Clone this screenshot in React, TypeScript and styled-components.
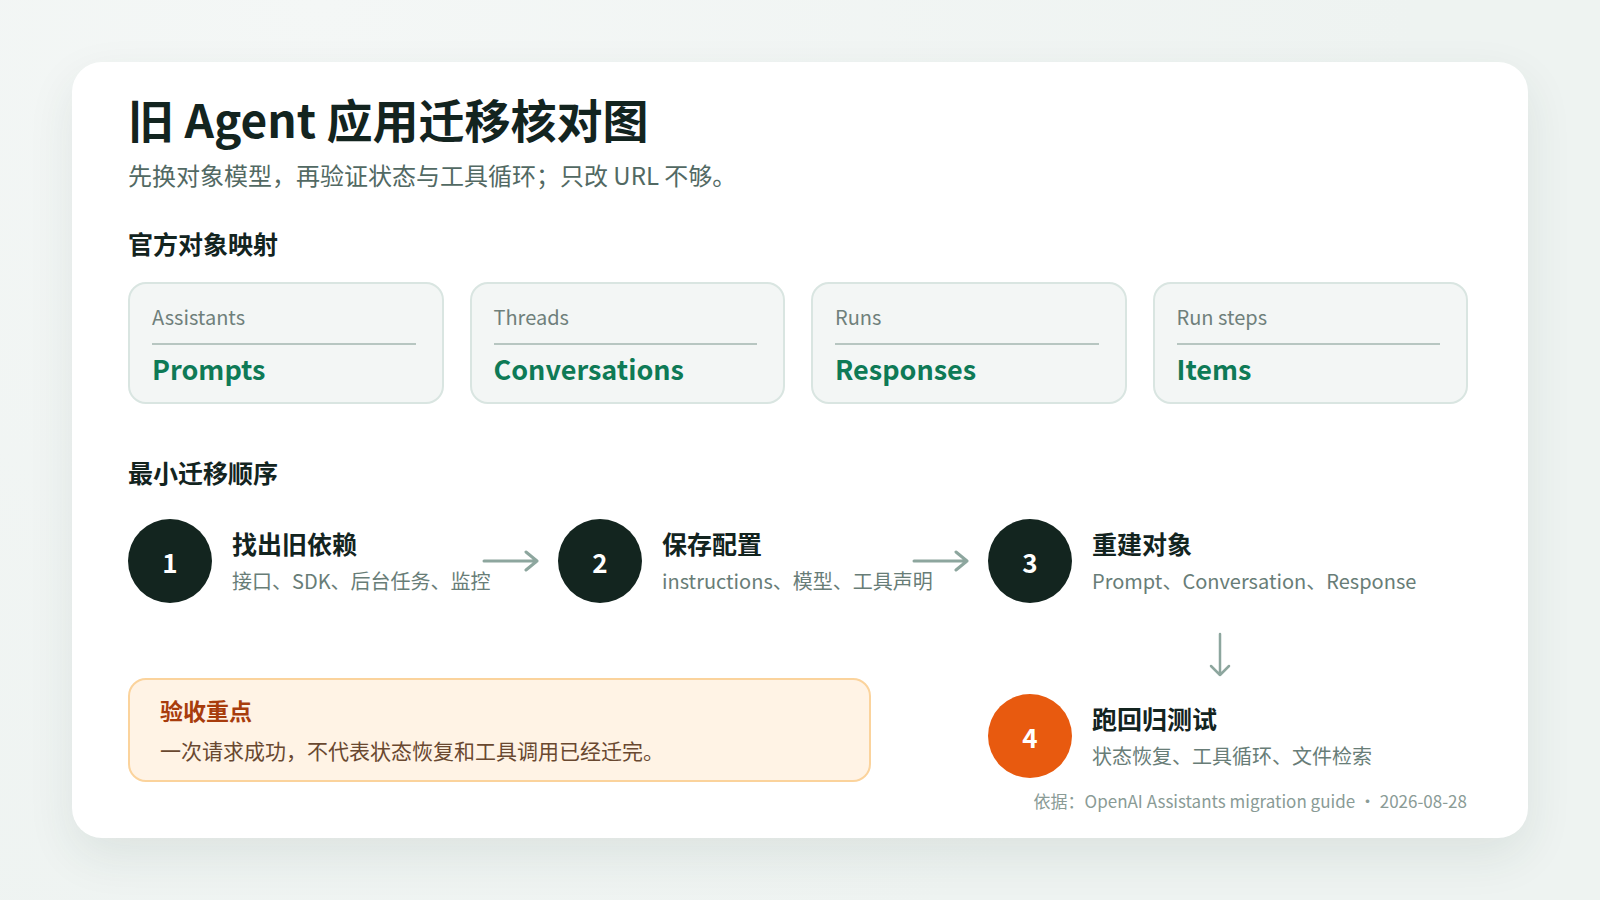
import React from "react";
import styled, { createGlobalStyle } from "styled-components";

const GlobalStyle = createGlobalStyle`
    html, body {
        margin: 0;
        padding: 0;
        background: #eef3f1;
    }

    body {
        font-family: "Noto Sans CJK SC", "Noto Sans", sans-serif;
        color: #13241f;
    }
`;

const Page = styled.div`
    box-sizing: border-box;
    width: 1600px;
    height: 900px;
    padding: 62px 72px;
    background: radial-gradient(circle at 20% 0%, #f4f7f6 0%, #eef3f1 70%);
`;

const Board = styled.div`
    box-sizing: border-box;
    height: 776px;
    padding: 29px 56px 0;
    background: #ffffff;
    border-radius: 30px;
    box-shadow: 0 18px 48px rgba(30, 70, 55, 0.09);
    display: flex;
    flex-direction: column;
`;

const Title = styled.h1`
    margin: 0;
    font-size: 46px;
    line-height: 54px;
    font-weight: 700;
    color: #13241f;
`;

const Subtitle = styled.p`
    margin: 14px 0 0;
    font-size: 24px;
    line-height: 32px;
    color: #526963;
`;

const SectionTitle = styled.h2<{ $gap: number }>`
    margin: ${(p) => p.$gap}px 0 0;
    font-size: 25px;
    line-height: 32px;
    font-weight: 700;
    color: #13241f;
`;

const MapGrid = styled.div`
    margin-top: 23px;
    width: 1340px;
    display: grid;
    grid-template-columns: repeat(4, 1fr);
    gap: 26px;
`;

const MapCard = styled.div`
    box-sizing: border-box;
    height: 122px;
    padding: 19px 26px 0 22px;
    background: #f3f6f5;
    border: 2px solid #d9e5e1;
    border-radius: 18px;
`;

const MapFrom = styled.div`
    font-size: 20px;
    line-height: 28px;
    color: #6f807b;
    padding-bottom: 12px;
    border-bottom: 2px solid #b7c6c1;
`;

const MapTo = styled.div`
    margin-top: 6px;
    font-size: 27px;
    line-height: 36px;
    font-weight: 700;
    color: #0e7a56;
`;

const Flow = styled.div`
    margin-top: 31px;
    display: grid;
    grid-template-columns: 430px 430px 464px;
    grid-template-rows: 84px 75px 104px;
`;

const StepCell = styled.div<{ $col: number; $row: number; $top?: number }>`
    position: relative;
    grid-column: ${(p) => p.$col};
    grid-row: ${(p) => p.$row};
    padding-top: ${(p) => p.$top ?? 0}px;
    display: flex;
    align-items: flex-start;
    gap: 20px;
`;

const Badge = styled.div<{ $accent?: boolean }>`
    flex: none;
    width: 84px;
    height: 84px;
    border-radius: 50%;
    background: ${(p) => (p.$accent ? "#e85a0f" : "#13251f")};
    color: #ffffff;
    display: flex;
    align-items: center;
    justify-content: center;
    font-size: 26px;
    font-weight: 700;
`;

const StepText = styled.div`
    display: flex;
    flex-direction: column;
    justify-content: center;
    height: 84px;
`;

const StepTitle = styled.div`
    font-size: 25px;
    line-height: 32px;
    font-weight: 700;
    color: #13241f;
`;

const StepDesc = styled.div`
    margin-top: 8px;
    font-size: 20px;
    line-height: 28px;
    color: #687d77;
    white-space: nowrap;
`;

const NextArrow = styled.svg`
    position: absolute;
    right: 18px;
    top: 31px;
`;

const DownCell = styled.div`
    grid-column: 3;
    grid-row: 2;
    padding: 29px 0 0 220px;
`;

const Callout = styled.div`
    grid-column: 1 / span 2;
    grid-row: 3;
    box-sizing: border-box;
    width: 743px;
    height: 104px;
    padding: 15px 30px 0;
    background: #fff3e5;
    border: 2px solid #fbd39c;
    border-radius: 18px;
`;

const CalloutTitle = styled.div`
    font-size: 23px;
    line-height: 30px;
    font-weight: 700;
    color: #a83c0c;
`;

const CalloutText = styled.div`
    margin-top: 10px;
    font-size: 21px;
    line-height: 30px;
    color: #694830;
`;

const Footer = styled.div`
    margin: 7px 5px 0 0;
    align-self: flex-end;
    font-size: 17px;
    line-height: 24px;
    color: #8a9b96;
`;

const mappings = [
    { from: "Assistants", to: "Prompts" },
    { from: "Threads", to: "Conversations" },
    { from: "Runs", to: "Responses" },
    { from: "Run steps", to: "Items" },
];

const RightArrow = () => (
    <NextArrow width="58" height="22" viewBox="0 0 58 22" fill="none">
        <path d="M2 11H55M44 2L55 11L44 20" stroke="#8da69e" strokeWidth="3" strokeLinecap="round" strokeLinejoin="round" />
    </NextArrow>
);

const App = () => {
    const steps = [
        { n: "1", title: "找出旧依赖", desc: "接口、SDK、后台任务、监控", col: 1, row: 1 },
        { n: "2", title: "保存配置", desc: "instructions、模型、工具声明", col: 2, row: 1 },
        { n: "3", title: "重建对象", desc: "Prompt、Conversation、Response", col: 3, row: 1 },
    ];

    return (
        <>
            <GlobalStyle />
            <Page>
                <Board>
                    <Title>旧 Agent 应用迁移核对图</Title>
                    <Subtitle>先换对象模型，再验证状态与工具循环；只改 URL 不够。</Subtitle>

                    <SectionTitle $gap={36}>官方对象映射</SectionTitle>
                    <MapGrid>
                        {mappings.map((m) => (
                            <MapCard key={m.from}>
                                <MapFrom>{m.from}</MapFrom>
                                <MapTo>{m.to}</MapTo>
                            </MapCard>
                        ))}
                    </MapGrid>

                    <SectionTitle $gap={52}>最小迁移顺序</SectionTitle>
                    <Flow>
                        {steps.map((s) => (
                            <StepCell key={s.n} $col={s.col} $row={s.row}>
                                <Badge>{s.n}</Badge>
                                <StepText>
                                    <StepTitle>{s.title}</StepTitle>
                                    <StepDesc>{s.desc}</StepDesc>
                                </StepText>
                                {s.col < 3 && <RightArrow />}
                            </StepCell>
                        ))}
                        <DownCell>
                            <svg width="24" height="46" viewBox="0 0 24 46" fill="none">
                                <path d="M12 2V43M3 34L12 43L21 34" stroke="#8da69e" strokeWidth="2.5" strokeLinecap="round" strokeLinejoin="round" />
                            </svg>
                        </DownCell>
                        <Callout>
                            <CalloutTitle>验收重点</CalloutTitle>
                            <CalloutText>一次请求成功，不代表状态恢复和工具调用已经迁完。</CalloutText>
                        </Callout>
                        <StepCell $col={3} $row={3} $top={16}>
                            <Badge $accent>4</Badge>
                            <StepText>
                                <StepTitle>跑回归测试</StepTitle>
                                <StepDesc>状态恢复、工具循环、文件检索</StepDesc>
                            </StepText>
                        </StepCell>
                    </Flow>
                    <Footer>依据：OpenAI Assistants migration guide ・ 2026-08-28</Footer>
                </Board>
            </Page>
        </>
    );
};

export default App;
